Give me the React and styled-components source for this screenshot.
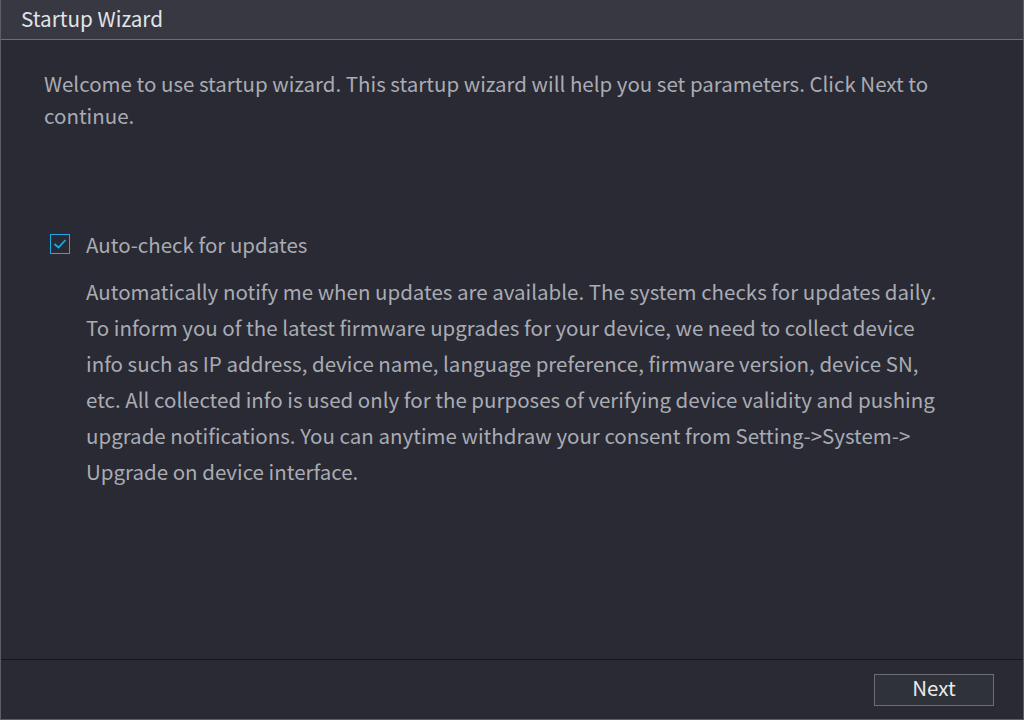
import React, { useState } from 'react';
import styled, { createGlobalStyle } from 'styled-components';

const GlobalStyle = createGlobalStyle`
  html, body {
    margin: 0;
    padding: 0;
    background: #292a33;
  }
  body {
    font-family: "Noto Sans CJK SC", "Noto Sans", sans-serif;
  }
`;

const Window = styled.div`
  box-sizing: border-box;
  width: 1024px;
  height: 720px;
  display: flex;
  flex-direction: column;
  background: #292a33;
  border: 1px solid #5b5e66;
  border-top: none;
`;

const TitleBar = styled.div`
  box-sizing: border-box;
  height: 40px;
  flex: none;
  display: flex;
  align-items: center;
  padding: 0 0 3px 20px;
  background: #373841;
  border-bottom: 1px solid #6b6e76;
  color: #e2e4e8;
  font-size: 20.7px;
`;

const Body = styled.div`
  flex: 1;
  padding: 27px 43px 0;
  color: #a9acb3;
  font-size: 20.5px;
`;

const Intro = styled.p`
  margin: 0;
  line-height: 32px;
`;

const CheckRow = styled.label`
  display: flex;
  align-items: center;
  gap: 16px;
  margin-top: 97px;
  margin-left: 6px;
  cursor: pointer;
  line-height: 32px;
`;

const Box = styled.span`
  box-sizing: border-box;
  width: 20px;
  height: 20px;
  display: flex;
  align-items: center;
  justify-content: center;
  border: 1px solid #1fa9e8;
`;

const Detail = styled.p`
  margin: 13px 0 0 42px;
  max-width: 856px;
  line-height: 36px;
`;

const Footer = styled.div`
  height: 59px;
  flex: none;
  display: flex;
  align-items: center;
  justify-content: flex-end;
  padding-right: 29px;
  border-top: 1px solid #15161b;
`;

const Button = styled.button`
  box-sizing: border-box;
  width: 120px;
  height: 32px;
  display: flex;
  align-items: center;
  justify-content: center;
  background: #30323a;
  border: 1px solid #6a6d75;
  color: #e8eaee;
  font-family: inherit;
  font-size: 20.5px;
  line-height: 24px;
  padding: 0 0 5px;
  cursor: pointer;
`;

export default function App() {
  const [checked, setChecked] = useState(true);
  return (
    <Window>
      <GlobalStyle />
      <TitleBar>Startup Wizard</TitleBar>
      <Body>
        <Intro>
          Welcome to use startup wizard. This startup wizard will help you set parameters. Click Next to continue.
        </Intro>
        <CheckRow onClick={() => setChecked(!checked)}>
          <Box>
            {checked && (
              <svg width="14" height="12" viewBox="0 0 14 12">
                <path d="M1.5 6 L5.5 9.5 L12.5 2" fill="none" stroke="#1fa9e8" strokeWidth="1.8" />
              </svg>
            )}
          </Box>
          Auto-check for updates
        </CheckRow>
        <Detail>
          Automatically notify me when updates are available. The system checks for updates daily.
          To inform you of the latest firmware upgrades for your device, we need to collect device
          info such as IP address, device name, language preference, firmware version, device SN,
          etc. All collected info is used only for the purposes of verifying device validity and pushing
          upgrade notifications. You can anytime withdraw your consent from Setting-&gt;System-&gt;
          Upgrade on device interface.
        </Detail>
      </Body>
      <Footer>
        <Button>Next</Button>
      </Footer>
    </Window>
  );
}
